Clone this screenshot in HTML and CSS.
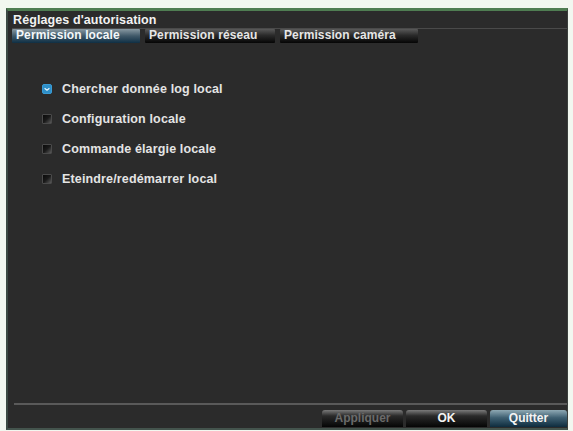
FILE: index.html
```html
<!DOCTYPE html>
<html lang="fr">
<head>
<meta charset="utf-8">
<title>Réglages d'autorisation</title>
<link rel="stylesheet" href="styles.css">
</head>
<body>
<div class="dialog">
  <div class="title">Réglages d'autorisation</div>
  <div class="tabbar">
    <div class="tab active">Permission locale</div>
    <div class="tab">Permission réseau</div>
    <div class="tab">Permission caméra</div>
  </div>
  <div class="content">
    <ul class="opts">
      <li class="opt"><span class="cb checked"><svg viewBox="0 0 10 10" width="8" height="8"><path d="M2 4 L5 6.5 L8 4" fill="none" stroke="#e8f4fb" stroke-width="1.5"/></svg></span>Chercher donnée log local</li>
      <li class="opt"><span class="cb"></span>Configuration locale</li>
      <li class="opt"><span class="cb"></span>Commande élargie locale</li>
      <li class="opt"><span class="cb"></span>Eteindre/redémarrer local</li>
    </ul>
  </div>
  <div class="footer">
    <div class="btn disabled">Appliquer</div>
    <div class="btn">OK</div>
    <div class="btn primary">Quitter</div>
  </div>
</div>
</body>
</html>
```
FILE: styles.css
```css
html, body {
  margin: 0;
  padding: 0;
}
body {
  background: #f2f7f0;
  font-family: "Liberation Sans", Arial, sans-serif;
  width: 573px;
  height: 431px;
  overflow: hidden;
}
.dialog {
  margin: 8px 0 0 6px;
  width: 559px;
  height: 417px;
  background: #2b2b2b;
  border-top: 3px solid #4f7d52;
  border-left: 2px solid #3c4a44;
  border-bottom: 2px solid #44544d;
  border-right: 1px solid #3a3f3c;
  display: flex;
  flex-direction: column;
}
.title {
  height: 15px;
  padding: 2px 0 0 5px;
  color: #f2f2f2;
  font-size: 12.5px;
  font-weight: bold;
  line-height: 14px;
  letter-spacing: 0.1px;
}
.tabbar {
  display: flex;
  gap: 5px;
  height: 14px;
  margin: 0 0 0 4px;
  border-top: 1px solid #4a4a4a;
}
.tab {
  width: 130px;
  padding-left: 4px;
  box-sizing: border-box;
  height: 14px;
  color: #e6e6e6;
  font-size: 12px;
  font-weight: bold;
  line-height: 13px;
  background: linear-gradient(#5a5a5a 0%, #2a2a2a 45%, #050505 100%);
  border-radius: 1px;
  letter-spacing: 0.1px;
  white-space: nowrap;
}
.tab.active {
  width: 128px;
  background: linear-gradient(#8899a2 0%, #3f5868 50%, #0f2f44 100%);
  color: #f4f8fa;
}
.tab:last-child {
  width: 138px;
}
.content {
  flex: 1;
}
.opts {
  list-style: none;
  margin: 0;
  padding: 39px 0 0 34px;
}
.opt {
  display: flex;
  align-items: center;
  height: 14px;
  margin-bottom: 16px;
  color: #e4e4e4;
  font-size: 12.5px;
  font-weight: bold;
  letter-spacing: 0.15px;
}
.cb {
  width: 8px;
  height: 8px;
  margin-right: 10px;
  background: linear-gradient(135deg, #0a0a0a 0%, #1a1a1a 50%, #5a5a5a 100%);
  border: 1px solid #4a4a4a;
  border-radius: 1px;
  display: flex;
  align-items: center;
  justify-content: center;
}
.cb.checked {
  background: #2e8fc8;
  border-color: #3a9bd4;
  border-radius: 2px;
}
.footer {
  height: 22px;
  border-top: 2px solid #5a5a5a;
  margin-left: 6px;
  display: flex;
  justify-content: flex-end;
  align-items: flex-end;
  gap: 3px;
  padding-bottom: 1px;
}
.btn {
  width: 81px;
  height: 17px;
  box-sizing: border-box;
  border-radius: 3px 3px 0 0;
  background: linear-gradient(#7a7a7a 0%, #2a2a2a 35%, #050505 100%);
  color: #f4f4f4;
  font-size: 12px;
  font-weight: bold;
  text-align: center;
  line-height: 17px;
}
.btn.disabled {
  color: #6a6a6a;
}
.btn.primary {
  width: 77px;
  background: linear-gradient(#8fa9b4 0%, #3f6072 45%, #0e2c3e 100%);
}
```
